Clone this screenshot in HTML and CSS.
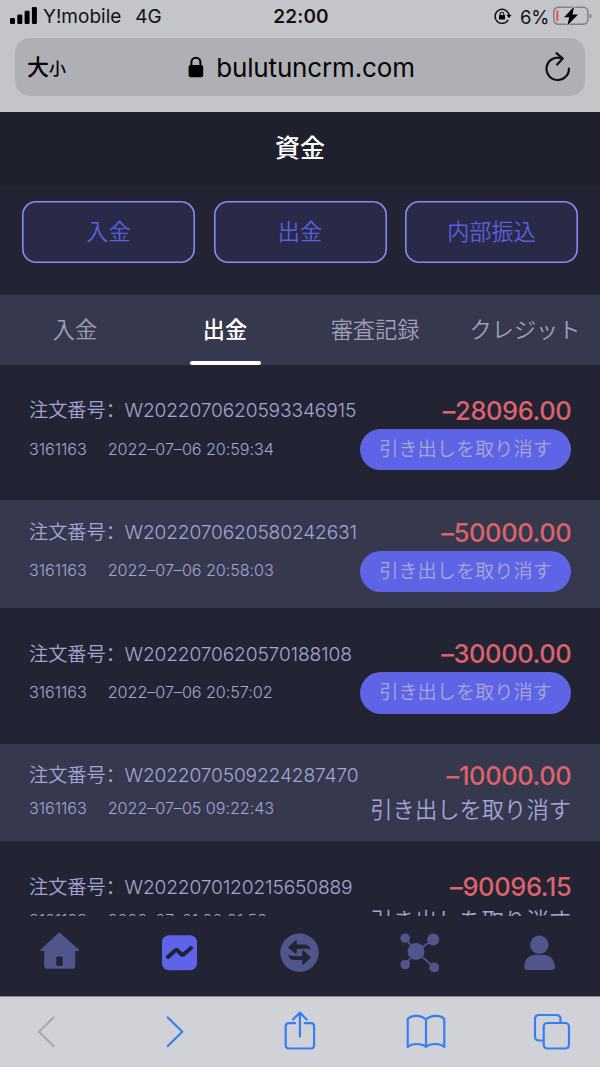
FILE: index.html
```html
<!DOCTYPE html>
<html lang="ja">
<head>
<meta charset="utf-8">
<title>資金</title>
<link rel="stylesheet" href="styles.css">
</head>
<body>
<div class="phone">
  <header class="browser-top">
    <div class="status">
      <div class="status-left">
        <svg class="signal" width="27" height="17" viewBox="0 0 27 17"><rect x="0" y="11" width="5" height="6" rx="1.2"/><rect x="7.3" y="7.5" width="5" height="9.5" rx="1.2"/><rect x="14.6" y="3.8" width="5" height="13.2" rx="1.2"/><rect x="21.9" y="0" width="5" height="17" rx="1.2"/></svg>
        <span class="carrier">Y!mobile</span>
        <span class="network">4G</span>
      </div>
      <span class="clock">22:00</span>
      <div class="status-right">
        <svg class="rotation" width="18" height="16" viewBox="0 0 18 16"><path d="M14.2 11.8A7 7 0 1 1 15 7.2" fill="none" stroke="#111" stroke-width="1.5"/><path d="M12.5 6.7h5l-2.5 3.6z"/><rect x="5" y="7" width="6" height="4.6" rx=".7"/><path d="M6.2 7.3V6a1.8 1.8 0 0 1 3.6 0v1.3" fill="none" stroke="#111" stroke-width="1.1"/></svg>
        <span class="percent">6%</span>
        <svg class="battery" width="39" height="20" viewBox="0 0 39 20"><rect x=".8" y="1.3" width="34" height="17" rx="4.5" fill="none" stroke="#818186" stroke-width="1.5"/><path d="M36.6 7.5q2 .5 2 2.5t-2 2.500z" fill="#818186"/><rect x="3.3" y="4.500" width="2" height="11" rx="1" fill="#f4503e"/><path d="M21 .8 11 11.200h5.200L14.400 19.500 25 8.500h-5.500z" stroke="#c5c6ca" stroke-width="2" fill="#000" paint-order="stroke"/></svg>
      </div>
    </div>
    <div class="address">
      <div class="text-size"><span class="size-large">大</span><span class="size-small">小</span></div>
      <div class="site">
        <svg width="16" height="22" viewBox="0 0 16 22"><rect x=".6" y="9" width="14.600" height="12.300" rx="2"/><path d="M3.400 10V6.200a4.500 4.500 0 0 1 9 0V10" fill="none" stroke="#000" stroke-width="2"/></svg>
        <span class="host">bulutuncrm.com</span>
      </div>
      <svg class="reload" width="26" height="30" viewBox="0 0 26 30"><path d="M23.900 16.500A11.200 11.200 0 1 1 16.500 6.300" /><path d="M11.500 1.200 17.800 6.500 12.200 12.500" /></svg>
    </div>
  </header>

  <main class="app">
    <h1 class="title">資金</h1>
    <div class="actions">
      <button class="action">入金</button>
      <button class="action">出金</button>
      <button class="action">内部振込</button>
    </div>
    <nav class="tabs">
      <span class="tab">入金</span>
      <span class="tab tab-active">出金</span>
      <span class="tab">審査記録</span>
      <span class="tab">クレジット</span>
    </nav>
    <div class="orders">
      <article class="order">
        <div class="line summary"><div class="order-no"><span class="label">注文番号<span class="colon" lang="zh-CN">：</span></span><span class="code">W2022070620593346915</span></div><span class="amount">–28096.00</span></div>
        <div class="line detail"><div class="meta"><span class="account">3161163</span><span>2022–07–06 20:59:34</span></div><span class="cancel">引き出しを取り消す</span></div>
      </article>
      <article class="order order-alt">
        <div class="line summary"><div class="order-no"><span class="label">注文番号<span class="colon" lang="zh-CN">：</span></span><span class="code">W2022070620580242631</span></div><span class="amount">–50000.00</span></div>
        <div class="line detail"><div class="meta"><span class="account">3161163</span><span>2022–07–06 20:58:03</span></div><span class="cancel">引き出しを取り消す</span></div>
      </article>
      <article class="order">
        <div class="line summary"><div class="order-no"><span class="label">注文番号<span class="colon" lang="zh-CN">：</span></span><span class="code">W2022070620570188108</span></div><span class="amount">–30000.00</span></div>
        <div class="line detail"><div class="meta"><span class="account">3161163</span><span>2022–07–06 20:57:02</span></div><span class="cancel">引き出しを取り消す</span></div>
      </article>
      <article class="order order-alt">
        <div class="line summary"><div class="order-no"><span class="label">注文番号<span class="colon" lang="zh-CN">：</span></span><span class="code">W2022070509224287470</span></div><span class="amount">–10000.00</span></div>
        <div class="line detail-plain"><div class="meta"><span class="account">3161163</span><span>2022–07–05 09:22:43</span></div><span class="cancelled">引き出しを取り消す</span></div>
      </article>
      <article class="order">
        <div class="line summary"><div class="order-no"><span class="label">注文番号<span class="colon" lang="zh-CN">：</span></span><span class="code">W2022070120215650889</span></div><span class="amount">–90096.15</span></div>
        <div class="line detail-plain"><div class="meta"><span class="account">3161163</span><span>2022–07–01 20:21:56</span></div><span class="cancelled">引き出しを取り消す</span></div>
      </article>
    </div>
    <nav class="app-nav">
      <svg width="40" height="40" viewBox="0 0 40 40"><path d="M19.300 .300 39.300 18q-.300 1-1.500 1H35.200v15.500q0 2.300-2.300 2.300H6.500q-2.300 0-2.300-2.300V19H1.300Q.300 19 .200 18z"/><rect x="16.300" y="24.500" width="6.300" height="9.500" rx="1.200" fill="#222434"/></svg>
      <svg width="40" height="40" viewBox="0 0 40 40"><rect x="2" y="3.300" width="35" height="35" rx="7" fill="#5f63e9"/><path d="M8 25 15.500 18.300Q16.500 17.500 17.500 18.500L21 22Q22.500 23.300 24 22L31 16" fill="none" stroke="#202236" stroke-width="4" stroke-linecap="round"/></svg>
      <svg width="40" height="40" viewBox="0 0 40 40"><circle cx="19.500" cy="20.700" r="19.200"/><g fill="#222434"><path d="M8 15.500 15.500 8.500Q16.800 7.800 16.800 9.500V12.500H24Q29 12.500 31 18Q28 16.300 24 16.700H16.800V20.500Q16.500 22 15.200 21.500z"/><path d="M31 25.500 23.500 32.500Q22.200 33 22.200 31.500V28H14Q9.500 28 8 22.500Q11 24.200 14.500 24H22.200V19.500Q22.500 18 23.800 18.800z"/></g></svg>
      <svg width="40" height="40" viewBox="0 0 40 40"><path d="M5.200 6.200 16 19.500 33.500 7.500M5.200 32.500 16 19.500 34.500 35.500" fill="none" stroke="#50568c" stroke-width="1.800"/><circle cx="16" cy="19.500" r="8.500"/><circle cx="5.200" cy="6.200" r="4.800"/><circle cx="33.200" cy="7.500" r="6"/><circle cx="5.200" cy="32.500" r="4.800"/><circle cx="34.200" cy="35.500" r="4.900"/></svg>
      <svg width="40" height="40" viewBox="0 0 40 40"><circle cx="19.300" cy="12.700" r="9.200"/><path d="M4.200 35.500Q4.500 23 16 22.700h6.500Q34.500 23 34.900 35.500 34.900 37.800 32.500 37.900H6.500Q4.200 37.800 4.200 35.500z"/></svg>
    </nav>
  </main>

  <footer class="toolbar">
    <svg width="40" height="44" viewBox="0 0 40 44" stroke="#a9aaae"><path d="M26.500 7.500 12 21.800 26.500 36" /></svg>
    <svg width="40" height="44" viewBox="0 0 40 44"><path d="M14.800 7.500 29.300 21.800 14.800 36"/></svg>
    <svg width="40" height="44" viewBox="0 0 40 44"><path d="M15 13.200H9Q5.700 13.200 5.700 16.500V35.200Q5.700 38.500 9 38.500H30.800Q34.100 38.500 34.100 35.200V16.500Q34.100 13.200 30.800 13.200H24.800M19.900 26.500V3M13 9.500 19.900 2.600 26.800 9.500"/></svg>
    <svg width="40" height="44" viewBox="0 0 40 44"><path d="M20 9.500C15.500 5 6 4.500 1.700 9V37C6 33 15.500 33 20 37C24.500 33 34 33 38.300 37V9C34 4.500 24.500 5 20 9.500zM20 9.500V37"/></svg>
    <svg width="40" height="44" viewBox="0 0 40 44"><path d="M11.500 30.500H7Q3 30.500 3 26.500V9Q3 5 7 5H24.500Q28.500 5 28.500 9V13"/><rect x="11.700" y="13" width="25.300" height="25.500" rx="3.500"/></svg>
  </footer>
</div>
</body>
</html>
```
FILE: styles.css
```css
* { box-sizing: border-box; }
body { margin: 0; font-family: Inter, "Noto Sans CJK JP", sans-serif; }
svg { display: block; flex: none; }
.phone { width: 600px; height: 1067px; display: flex; flex-direction: column; overflow: hidden; background: #222434; }
.browser-top { height: 112px; flex: none; background: #c4c5c9; color: #111; }
.status { height: 38px; display: grid; grid-template-columns: 1fr auto 1fr; align-items: center; padding: 0 8px 5px 10px; }
.status-left, .status-right { display: flex; align-items: center; }
.status-right { justify-content: flex-end; }
.signal { margin-right: 6px; margin-top: -2px; }
.carrier { font-size: 19px; letter-spacing: 0; }
.network { font-size: 19px; margin-left: 14px; letter-spacing: -.2px; }
.clock { font-size: 19px; font-weight: 600; letter-spacing: .1px; }
.rotation { margin-top: -1px; margin-right: 8px; }
.percent { font-size: 18.500px; margin-right: 4px; letter-spacing: -.3px; }
.battery { margin-top: -1px; }
.address { height: 58px; margin: 0 15px; padding: 0 14px 0 12px; border-radius: 15px; background: #afb0b5; color: #050505; display: grid; grid-template-columns: 60px 1fr 60px; align-items: center; }
.text-size { display: flex; align-items: baseline; font-weight: 500; line-height: 30px; padding-top: 2px; }
.size-large { font-size: 22px; }
.size-small { font-size: 17px; }
.site { display: flex; align-items: center; justify-content: center; gap: 12px; padding-left: 5px; }
.host { font-size: 26px; letter-spacing: -.15px; }
.reload { justify-self: end; fill: none; stroke: #111; stroke-width: 2.200; stroke-linecap: round; stroke-linejoin: round; }

.app { height: 884px; flex: none; display: flex; flex-direction: column; overflow: hidden; }
.title { margin: 0; height: 73px; padding-bottom: 5px; flex: none; display: flex; align-items: center; justify-content: center; background: #1e202e; color: #fff; font-size: 25px; font-weight: 500; }
.actions { height: 109.500px; flex: none; display: grid; grid-template-columns: repeat(3, 1fr); gap: 18.500px; padding: 16.300px 22px 0; align-items: start; }
.action { height: 61.500px; padding: 0 0 4px; border: 0; border-radius: 14px; box-shadow: inset 0 0 0 1.600px #858bf0; background: #282a48; color: #5a5fdc; font: 350 22.200px "Noto Sans CJK JP", sans-serif; }
.tabs { height: 70.200px; flex: none; display: grid; grid-template-columns: repeat(4, 1fr); background: #36384e; }
.tab { display: flex; flex-direction: column; align-items: center; color: #9ea0b8; font-size: 22.200px; font-weight: 350; line-height: 70px; white-space: nowrap; }
.tab-active { color: #fff; font-weight: 500; }
.tab-active::after { content: ""; width: 70.500px; height: 3.500px; flex: none; margin-top: -3.500px; margin-left: 1px; border-radius: 2px; background: #fff; }
.orders { flex: 1; min-height: 0; overflow: hidden; color: #a3a5d2; }
.order { padding: 30.200px 29px; background: #222434; }
.order-alt { padding-top: 16.100px; padding-bottom: 16.100px; background: #36384e; }
.line { height: 34px; display: flex; align-items: center; justify-content: space-between; white-space: nowrap; }
.summary { padding-bottom: 3px; }
.detail { height: 41.400px; }
.detail-plain { height: 31px; }
.order-no { display: flex; align-items: center; font-weight: 300; }
.label { width: 95.500px; font-size: 19.200px; font-weight: 350; line-height: 31px; }
.colon { font-family: "Noto Sans CJK SC", sans-serif; }
.code { font-size: 19.200px; letter-spacing: -.16px; }
.amount { color: #dc626c; font-size: 25.500px; font-weight: 500; letter-spacing: -.4px; margin-right: -.4px; }
.meta { display: flex; gap: 21px; font-size: 16.200px; font-weight: 300; letter-spacing: -.07px; padding-bottom: 2px; }
.cancel { width: 211px; height: 41.400px; border-radius: 21px; background: #5f63e6; color: #a6a9d6; font-size: 19.200px; font-weight: 350; line-height: 41px; text-align: center; }
.cancelled { font-size: 22.300px; font-weight: 350; line-height: 31px; }
.app-nav { height: 80px; flex: none; padding-top: 16px; display: grid; grid-template-columns: repeat(5, 1fr); justify-items: center; fill: #50568c; background: #222434; }
.toolbar { height: 71px; flex: none; display: grid; grid-template-columns: 40px 40px 40px 40px 40px; justify-content: space-between; padding: 13px 28px 0 27px; background: #d1d2d8; border-top: 1px solid #85868d; fill: none; stroke: #367ff3; stroke-width: 2.200; stroke-linecap: round; stroke-linejoin: round; }
```
